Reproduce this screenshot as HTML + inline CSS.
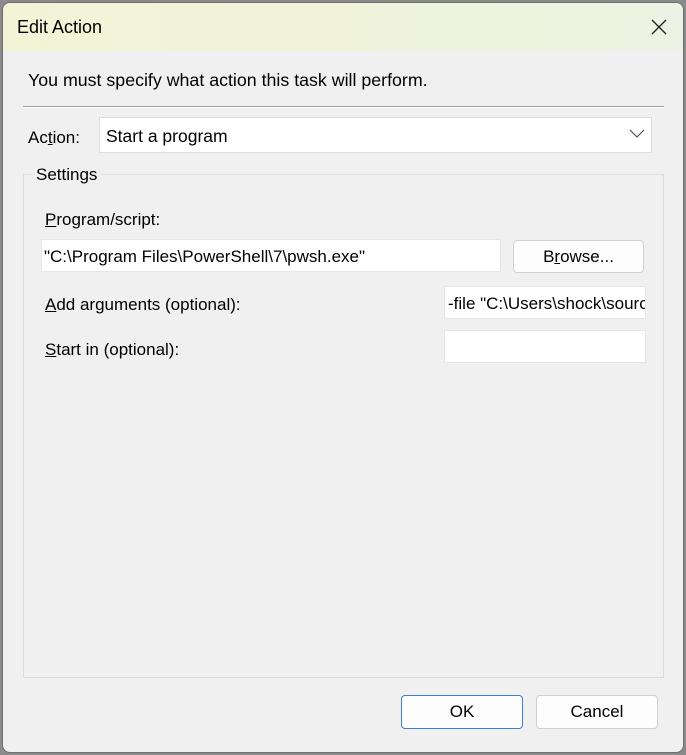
<!DOCTYPE html>
<html><head><style>
body{margin:0;width:686px;height:755px;background:#8a8a8a;position:relative;overflow:hidden;font-family:"Liberation Sans",sans-serif;font-size:17px;color:#000}
.win{position:absolute;left:2px;top:2px;width:680px;height:749px;border:1px solid #6e6e6e;border-radius:8px;background:#f0f0f0;overflow:hidden}
.title{position:absolute;left:0;top:0;width:680px;height:48px;background:linear-gradient(90deg,#f3f3d6,#eef3dc 70%,#eef2e4)}
.a{position:absolute;white-space:nowrap}
.box{position:absolute;background:#fff;border:1px solid #dcdcdc;box-sizing:border-box}
.btn{position:absolute;background:#fdfdfd;border:1px solid #d0d0d0;border-radius:4px;box-sizing:border-box;text-align:center}
u{text-decoration:underline}
</style></head><body>
<div class="win">
<div class="title"></div>
<div class="a" style="left:14px;top:14px;font-size:18px">Edit Action</div>
<svg class="a" style="left:647px;top:15px" width="18" height="18"><path d="M2 2L16 16M16 2L2 16" stroke="#222" stroke-width="1.4"/></svg>
<div class="a" style="left:25px;top:67px;font-size:17.8px">You must specify what action this task will perform.</div>
<div class="a" style="left:20px;top:103px;width:641px;height:1px;background:#a0a0a0;border-bottom:1px solid #fff"></div>
<div class="a" style="left:25px;top:125px">Ac<u>t</u>ion:</div>
<div class="box" style="left:96px;top:114px;width:553px;height:36px"></div>
<div class="a" style="left:103px;top:123px;font-size:17.5px">Start a program</div>
<svg class="a" style="left:626px;top:126px" width="16" height="10"><path d="M1 1L8 8L15 1" stroke="#555" fill="none" stroke-width="1.2"/></svg>
<div class="a" style="left:20px;top:171px;width:641px;height:504px;border:1px solid #dcdcdc;box-sizing:border-box"></div>
<div class="a" style="left:29px;top:162px;background:#f0f0f0;padding:0 4px">Settings</div>
<div class="a" style="left:42px;top:207px"><u>P</u>rogram/script:</div>
<div class="box" style="left:38px;top:236px;width:460px;height:33px;border-color:#e6e6e6"></div>
<div class="a" style="left:41px;top:244px">"C:\Program Files\PowerShell\7\pwsh.exe"</div>
<div class="btn" style="left:510px;top:237px;width:131px;height:33px;line-height:31px">B<u>r</u>owse...</div>
<div class="a" style="left:42px;top:292px"><u>A</u>dd arguments (optional):</div>
<div class="box" style="left:441px;top:283px;width:202px;height:33px;overflow:hidden;border-color:#e6e6e6"><span style="position:absolute;left:3px;top:7px;white-space:nowrap">-file "C:\Users\shock\source</span></div>
<div class="a" style="left:42px;top:337px"><u>S</u>tart in (optional):</div>
<div class="box" style="left:441px;top:327px;width:202px;height:33px;border-color:#e6e6e6"></div>
<div class="btn" style="left:398px;top:692px;width:122px;height:34px;line-height:32px;border:1px solid #3a7fd0">OK</div>
<div class="btn" style="left:533px;top:692px;width:122px;height:34px;line-height:32px">Cancel</div>
</div>
</body></html>
